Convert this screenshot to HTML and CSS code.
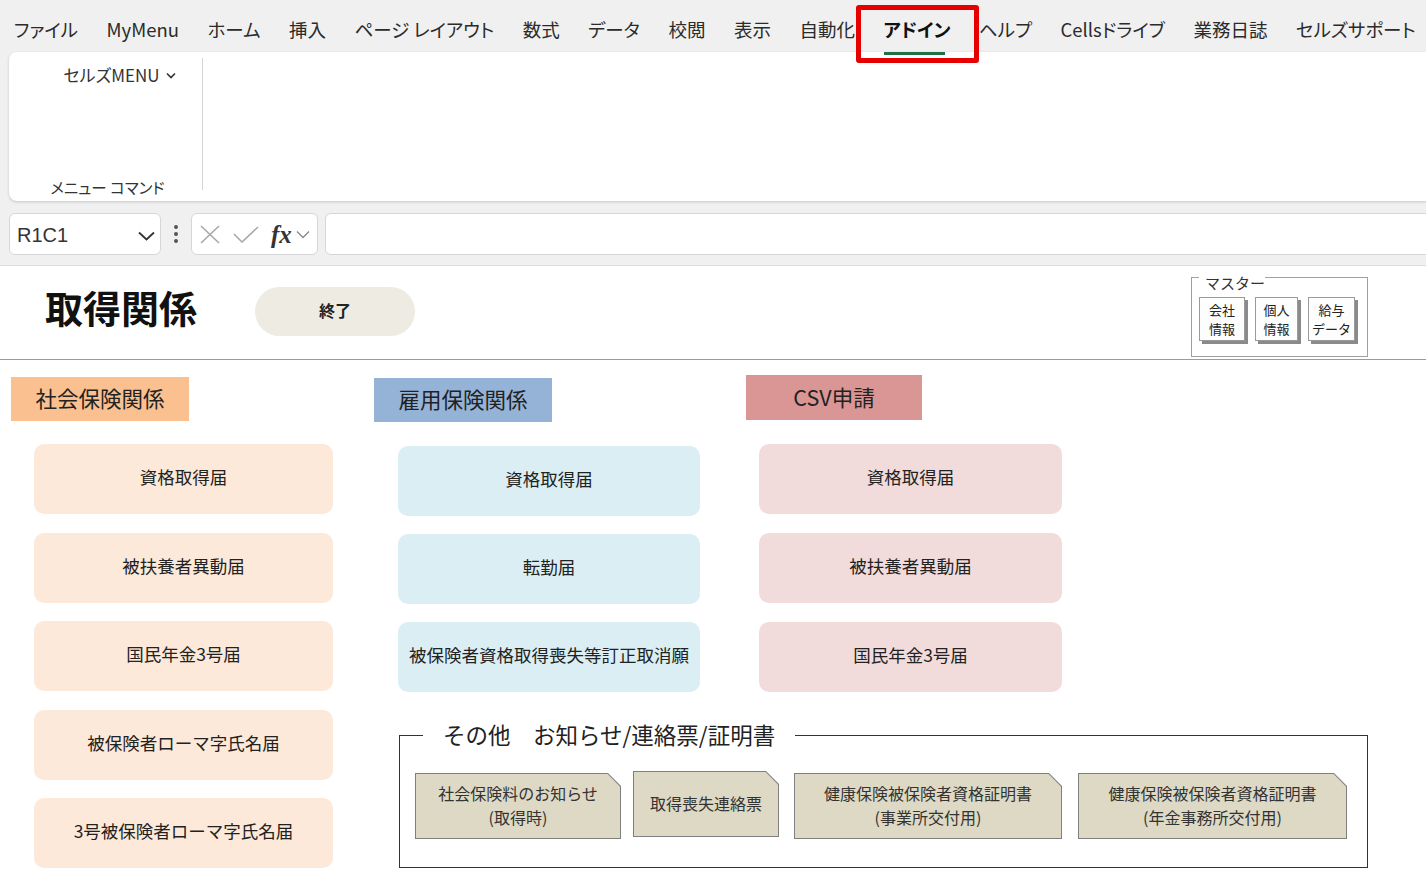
FILE: index.html
```html
<!DOCTYPE html>
<html lang="ja">
<head>
  <meta charset="UTF-8" />
  <meta name="viewport" content="width=device-width, initial-scale=1.0" />
  <title>取得関係</title>
  <link rel="stylesheet" href="styles.css">
</head>
<body>
  <div class="app">
    <nav class="tabs">
      <span class="tab">ファイル</span>
      <span class="tab">MyMenu</span>
      <span class="tab">ホーム</span>
      <span class="tab">挿入</span>
      <span class="tab">ページ レイアウト</span>
      <span class="tab">数式</span>
      <span class="tab">データ</span>
      <span class="tab">校閲</span>
      <span class="tab">表示</span>
      <span class="tab">自動化</span>
      <span class="tab active">アドイン<span class="mark"></span></span>
      <span class="tab">ヘルプ</span>
      <span class="tab">Cellsドライブ</span>
      <span class="tab">業務日誌</span>
      <span class="tab">セルズサポート</span>
    </nav>

    <div class="ribbon">
      <div class="group">
        <div class="menu-btn">セルズMENU
          <svg width="10" height="7" viewBox="0 0 10 7"><polyline points="1,1.5 5,5.5 9,1.5" fill="none" stroke="#333" stroke-width="1.6"/></svg>
        </div>
        <div class="group-label">メニュー コマンド</div>
      </div>
    </div>

    <div class="fbar">
      <div class="namebox">
        <span>R1C1</span>
        <svg width="17" height="10" viewBox="0 0 17 10"><polyline points="1,1.5 8.5,8.5 16,1.5" fill="none" stroke="#333" stroke-width="1.8"/></svg>
      </div>
      <div class="dots"><i></i><i></i><i></i></div>
      <div class="fx-box">
        <svg class="ic-x" width="20" height="19" viewBox="0 0 20 19"><path d="M1 1 L19 18 M19 1 L1 18" stroke="#a8a8a8" stroke-width="1.6"/></svg>
        <svg class="ic-check" width="26" height="17" viewBox="0 0 26 17"><polyline points="1,8 9,16 25,1" fill="none" stroke="#a8a8a8" stroke-width="1.6"/></svg>
        <span class="fx">fx</span>
        <svg width="14" height="9" viewBox="0 0 14 9"><polyline points="1,1.5 7,7.5 13,1.5" fill="none" stroke="#888" stroke-width="1.3"/></svg>
      </div>
      <div class="formula"></div>
    </div>
  </div>

  <div class="sheet">
    <div class="sheet-head">
      <h1 class="title">取得関係</h1>
      <button class="pill">終了</button>
      <fieldset class="master">
        <legend>マスター</legend>
        <div class="mbtns">
          <button class="mbtn m1">会社<br>情報</button>
          <button class="mbtn m2">個人<br>情報</button>
          <button class="mbtn m3">給与<br>データ</button>
        </div>
      </fieldset>
    </div>

    <div class="sheet-body">
      <section class="col col-social">
        <div class="col-head">社会保険関係</div>
        <div class="btns">
          <button class="card">資格取得届</button>
          <button class="card">被扶養者異動届</button>
          <button class="card">国民年金3号届</button>
          <button class="card">被保険者ローマ字氏名届</button>
          <button class="card">3号被保険者ローマ字氏名届</button>
        </div>
      </section>

      <div class="right-area">
        <div class="cols">
          <section class="col col-emp">
            <div class="col-head">雇用保険関係</div>
            <div class="btns">
              <button class="card">資格取得届</button>
              <button class="card">転勤届</button>
              <button class="card">被保険者資格取得喪失等訂正取消願</button>
            </div>
          </section>
          <section class="col col-csv">
            <div class="col-head">CSV申請</div>
            <div class="btns">
              <button class="card">資格取得届</button>
              <button class="card">被扶養者異動届</button>
              <button class="card">国民年金3号届</button>
            </div>
          </section>
        </div>

        <fieldset class="other">
          <legend>その他　お知らせ/連絡票/証明書</legend>
          <div class="notes">
            <button class="note n1"><span>社会保険料のお知らせ<br>(取得時)</span></button>
            <button class="note n2"><span>取得喪失連絡票</span></button>
            <button class="note n3"><span>健康保険被保険者資格証明書<br>(事業所交付用)</span></button>
            <button class="note n4"><span>健康保険被保険者資格証明書<br>(年金事務所交付用)</span></button>
          </div>
        </fieldset>
      </div>
    </div>
  </div>
</body>
</html>
```

FILE: styles.css
```css
* {
  box-sizing: border-box;
}
body {
  margin: 0;
  font-family: "Noto Sans CJK JP", sans-serif;
  color: #222;
  background: #fff;
  overflow: hidden;
}
button {
  font-family: inherit;
  color: inherit;
  border: none;
  padding: 0;
  cursor: pointer;
}

/* ribbon */
.app {
  background: #f0f0f0;
}
.tabs {
  display: flex;
  gap: 28.5px;
  height: 52px;
  padding: 16px 0 0 14px;
  font-size: 18.5px;
  line-height: 26px;
  font-feature-settings: "palt";
  white-space: nowrap;
  color: #2b2b2b;
}
.tab {
  position: relative;
}
.tab.active {
  font-weight: bold;
  color: #111;
}
.tab.active::after {
  content: "";
  position: absolute;
  left: 1px;
  right: 5px;
  bottom: -3px;
  height: 3px;
  background: #1e7145;
}
.mark {
  position: absolute;
  left: -27px;
  right: -29px;
  top: -11px;
  bottom: -11px;
  border: 5px solid #e60000;
  border-radius: 3px;
}
.ribbon {
  margin-left: 9px;
  height: 149px;
  background: #fff;
  border-radius: 8px 0 0 8px;
  box-shadow: 0 1px 3px rgba(0,0,0,0.18);
  padding: 6px 0 11px;
  display: flex;
}
.group {
  width: 194px;
  border-right: 1px solid #d4d4d4;
  display: flex;
  flex-direction: column;
  align-items: center;
  justify-content: space-between;
}
.menu-btn {
  margin: 6px 0 0 28px;
  font-size: 17px;
  line-height: 22px;
  font-feature-settings: "palt";
  color: #333;
  display: flex;
  align-items: center;
  gap: 6px;
}
.group-label {
  margin: 0 0 -7px 4px;
  font-size: 15.5px;
  line-height: 20px;
  font-feature-settings: "palt";
  color: #333;
}

/* formula bar */
.fbar {
  display: flex;
  align-items: center;
  padding: 12px 0 10px 9px;
}
.namebox, .fx-box, .formula {
  height: 42px;
  background: #fff;
  border: 1px solid #d6d6d6;
  border-radius: 6px;
}
.namebox {
  width: 152px;
  display: flex;
  align-items: center;
  justify-content: space-between;
  padding: 3px 5px 0 7px;
  font-family: "Liberation Sans", sans-serif;
  font-size: 20px;
  color: #333;
}
.dots {
  width: 30px;
  display: flex;
  flex-direction: column;
  align-items: center;
  gap: 3px;
}
.dots i {
  width: 4px;
  height: 4px;
  border-radius: 50%;
  background: #555;
}
.fx-box {
  width: 127px;
  display: flex;
  align-items: center;
  padding-left: 8px;
}
.ic-check {
  margin-left: 13px;
}
.fx {
  margin: 0 4px 0 12px;
  font-family: "Liberation Serif", serif;
  font-style: italic;
  font-weight: bold;
  font-size: 25px;
  line-height: 1;
  color: #333;
}
.formula {
  flex: 1;
  margin: 0 -10px 0 7px;
}

/* sheet */
.sheet {
  border-top: 1px solid #dcdcdc;
  height: 622px;
}
.sheet-head {
  display: flex;
  align-items: flex-start;
  height: 94px;
  padding-left: 45px;
  border-bottom: 1px solid #9a9a9a;
}
.title {
  margin: 19px 0 0;
  font-size: 38px;
  line-height: 44px;
  font-weight: bold;
  color: #111;
}
.pill {
  margin: 21px 0 0 58px;
  width: 160px;
  height: 49px;
  padding-bottom: 4px;
  border-radius: 25px;
  background: #eeebe2;
  font-size: 16px;
  font-weight: bold;
}
.master {
  margin: -3px 58px 0 auto;
  width: 177px;
  height: 94px;
  padding: 0 7px;
  border: 1px solid #a0a0a0;
}
.master legend {
  padding: 12px 0 0 6px;
  font-size: 15px;
  line-height: 16px;
  color: #333;
}
.mbtns {
  display: flex;
  gap: 10px;
  margin-top: 6px;
}
.mbtn {
  height: 44px;
  padding-bottom: 1px;
  background: #fdfdfd;
  border: 1px solid #9a9a9a;
  box-shadow: 3px 3px 0 #8a8a8a;
  font-size: 13px;
  line-height: 19px;
  color: #222;
}
.m1 { width: 46px; }
.m2 { width: 43px; }
.m3 { width: 47px; }

.sheet-body {
  display: flex;
  padding-top: 15px;
}
.col-head {
  width: 178px;
  height: 44px;
  display: flex;
  align-items: center;
  justify-content: center;
  padding-bottom: 3px;
  font-size: 21.5px;
  color: #222;
}
.btns {
  display: flex;
  flex-direction: column;
}
.card {
  height: 70px;
  padding-bottom: 5px;
  border-radius: 10px;
  font-size: 17.5px;
  color: #222;
}
.col-social {
  margin-left: 11px;
  width: 363px;
  padding-top: 2px;
}
.col-social .col-head { background: #fac090; }
.col-social .btns { margin: 23px 0 0 23px; gap: 18.5px; }
.col-social .card { width: 299px; background: #fde9d9; }

.cols {
  display: flex;
}
.col-emp {
  width: 372px;
  padding-top: 3px;
}
.col-emp .col-head { background: #95b3d7; }
.col-emp .btns { margin: 24px 0 0 24px; gap: 18px; }
.col-emp .card { width: 302px; background: #daeef3; }

.col-csv .col-head { width: 176px; height: 45px; background: #da9694; }
.col-csv .btns { margin: 24px 0 0 13px; gap: 19px; }
.col-csv .card { width: 303px; background: #f2dcdb; }

.other {
  margin: 27px 0 0 25px;
  width: 969px;
  height: 149px;
  padding: 0 15px;
  border: 1px solid #333;
}
.other legend {
  margin-left: 8px;
  padding: 0 20px 3px;
  font-size: 22.5px;
  line-height: 30px;
  color: #222;
}
.notes {
  display: flex;
  align-items: flex-start;
  margin-top: 21px;
}
.note {
  height: 66px;
  padding: 1px;
  background: #7f7f7f;
  clip-path: polygon(0 0, calc(100% - 13px) 0, 100% 13px, 100% 100%, 0 100%);
}
.note span {
  display: flex;
  align-items: center;
  justify-content: center;
  height: 100%;
  padding-bottom: 3px;
  background: #ddd9c4;
  clip-path: polygon(0 0, calc(100% - 12.4px) 0, 100% 12.4px, 100% 100%, 0 100%);
  font-size: 16px;
  line-height: 24px;
  color: #333;
}
.n1 { width: 206px; }
.n2 { width: 146px; margin-left: 12px; margin-top: -2px; }
.n3 { width: 268px; margin-left: 15px; }
.n4 { width: 269px; margin-left: 16px; }
```
